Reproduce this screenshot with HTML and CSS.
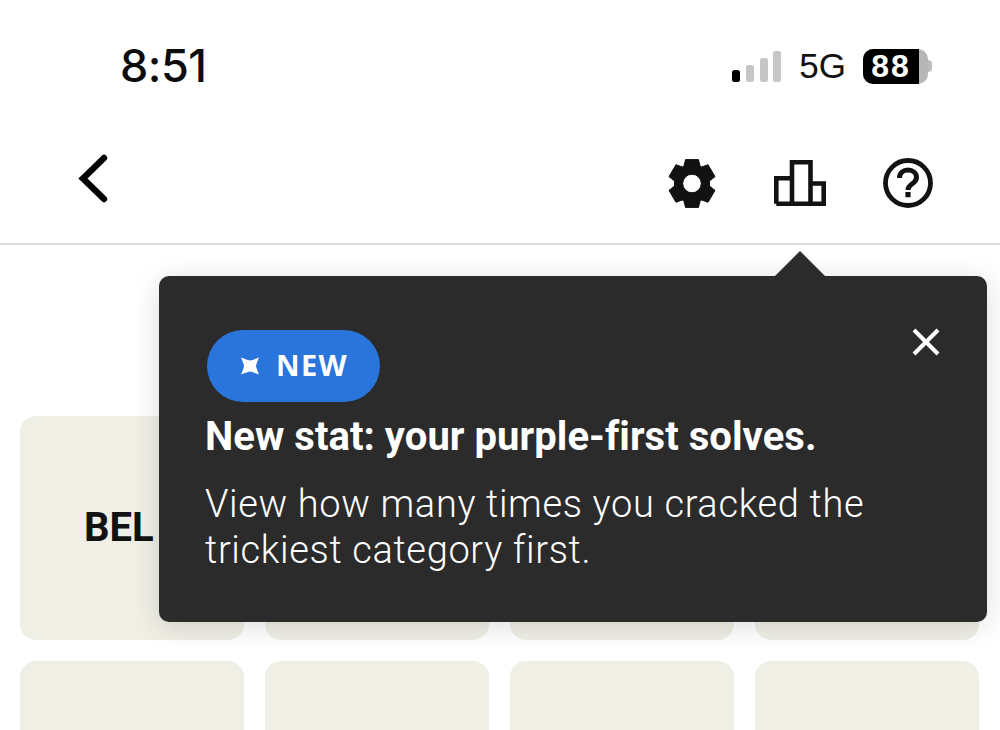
FILE: index.html
```html
<!DOCTYPE html>
<html lang="en">
<head>
<meta charset="utf-8">
<title>Connections</title>
<link rel="stylesheet" href="styles.css">
</head>
<body>
<div class="app">
  <div class="status">
    <span class="time">8:51</span>
    <div class="status-right">
      <div class="signal"><i class="bar b1 on"></i><i class="bar b2"></i><i class="bar b3"></i><i class="bar b4"></i></div>
      <span class="net">5G</span>
      <div class="battery"><div class="batt-body"><span class="batt-fill">88</span><span class="batt-rest"></span></div><i class="batt-cap"></i></div>
    </div>
  </div>
  <header class="nav">
    <svg class="back" viewBox="0 0 32 50" width="32" height="50"><path d="M27 4 6 24.500 27 45" fill="none" stroke="#000" stroke-width="6.400" stroke-linecap="round"/></svg>
    <div class="nav-icons">
      <svg width="48" height="49" viewBox="0 0 48 49"><path fill="#121212" stroke="#121212" stroke-width="1" stroke-linejoin="round" fill-rule="evenodd" d="M17.500.6H30.500L32 7 33.800 8 40 5.700 47 17.600 41.500 22V27L47 31.400 40 43.300 33.800 41 32 42 30.500 48.400H17.500L16 42 14.200 41 8 43.300 1 31.400 6.500 27V22L1 17.600 8 5.700 14.200 8 16 7ZM24 15.200A9.300 9.300 0 1 0 24 33.800 9.300 9.300 0 0 0 24 15.200Z"/></svg>
      <svg width="52" height="46" viewBox="0 0 52 46"><path fill="none" stroke="#121212" stroke-width="4.600" d="M2.300 43.700V18.200H18M18 43.700V2.300H36.500V43.700M36.500 23.500H49.700V43.700H2.300"/></svg>
      <svg width="50" height="50" viewBox="0 0 50 50"><circle cx="25" cy="25" r="22.500" fill="none" stroke="#121212" stroke-width="4.800"/><path fill="none" stroke="#121212" stroke-width="5" d="M16.500 20c0-5 3.800-8 8.500-8s8.500 3 8.500 7.500c0 6.500-8.500 6-8.500 12.500"/><rect x="22.400" y="34" width="5.200" height="5.200" fill="#121212"/></svg>
    </div>
  </header>
  <main class="grid">
    <div class="tile tile-word">BEL</div><div class="tile"></div><div class="tile"></div><div class="tile"></div>
    <div class="tile"></div><div class="tile"></div><div class="tile"></div><div class="tile"></div>
  </main>
  <aside class="tip">
    <i class="tip-arrow"></i>
    <svg class="close" width="30" height="30" viewBox="0 0 30 30"><path d="M3 3 27 27M27 3 3 27" stroke="#fff" stroke-width="4" fill="none"/></svg>
    <div class="pill">
      <svg width="20" height="20" viewBox="0 0 20 20"><path fill="#fff" d="M1 1.500C5 3 7.500 4 10 4.500 12.500 4 15 3 19 1.500 17.500 5 16.500 7.500 16 10c.5 2.500 1.500 5 3 8.500-4-1.500-6.500-2.500-9-3-2.500.5-5 1.500-9 3C2.500 15 3.500 12.500 4 10 3.500 7.500 2.500 5 1 1.500z"/></svg>
      <span>NEW</span>
    </div>
    <h2 class="tip-title">New stat: your purple-first solves.</h2>
    <p class="tip-text">View how many times you cracked the trickiest category first.</p>
  </aside>
</div>
</body>
</html>
```
FILE: styles.css
```css
* { box-sizing: border-box; }
html, body { margin: 0; padding: 0; height: 100%; overflow: hidden; background: #fff; }
.app { position: relative; width: 1000px; height: 730px; overflow: hidden; font-family: "Roboto", "Liberation Sans", sans-serif; color: #121212; }
.status { height: 125px; display: flex; align-items: flex-start; justify-content: space-between; padding: 40px 68px 0 120px; }
.time { font: 500 45px/52px "Inter", "Liberation Sans", sans-serif; color: #0c0c0c; letter-spacing: -0.500px; }
.status-right { display: flex; align-items: center; height: 52px; }
.signal { display: flex; align-items: flex-end; gap: 5.700px; height: 32px; margin-right: 18px; }
.bar { display: block; width: 8px; border-radius: 2.500px; background: #c6c6c6; }
.bar.on { background: #000; }
.b1 { height: 12px; } .b2 { height: 17px; } .b3 { height: 24px; } .b4 { height: 31px; }
.net { font: 400 35px/40px "Liberation Sans", sans-serif; color: #111; margin-right: 17px; }
.battery { display: flex; align-items: center; }
.batt-body { display: flex; width: 65px; height: 35px; border-radius: 10px; overflow: hidden; background: #b6b6b6; }
.batt-fill { width: 56px; background: #000; color: #fff; font: 700 32px/35px "Liberation Sans", sans-serif; text-align: center; letter-spacing: 2px; }
.batt-rest { flex: 1; }
.batt-cap { display: block; width: 4px; height: 12px; background: #bdbdbd; border-radius: 0 6px 6px 0; }
.nav { height: 120px; border-bottom: 2px solid #dedede; display: flex; align-items: flex-start; justify-content: space-between; padding: 29px 67px 0 77px; }
.back { display: block; }
.nav-icons { display: flex; align-items: center; gap: 57.500px; padding-top: 4px; }
.grid { display: grid; grid-template-columns: repeat(4, 224px); grid-auto-rows: 224px; gap: 21px; padding: 171px 0 0 20px; }
.tile { background: #efefe6; border-radius: 16px; display: flex; align-items: center; justify-content: center; }
.tile-word { justify-content: flex-start; padding-left: 64px; font: 700 40px/1 "Roboto", "Liberation Sans", sans-serif; color: #121212; }
.tip { position: absolute; left: 159px; top: 276px; width: 828px; height: 346px; background: #2b2b2b; border-radius: 10px; padding: 54px 46px 0 46px; color: #fff; box-shadow: 0 4px 28px rgba(0,0,0,.14); }
.tip-arrow { position: absolute; left: 615px; top: -25px; width: 52px; height: 26px; background: #2b2b2b; clip-path: polygon(50% 0, 100% 100%, 0 100%); }
.close { position: absolute; left: 752px; top: 51px; }
.pill { display: flex; align-items: center; width: 173px; height: 72px; margin-left: 2px; padding-left: 33px; gap: 16px; background: #2a75dc; border-radius: 36px; }
.pill span { font: 700 29px/1 "Open Sans", "Liberation Sans", sans-serif; letter-spacing: 1.300px; padding-bottom: 4px; }
.tip-title { margin: 12px 0 0; font: 700 40px/46px "Roboto", "Liberation Sans", sans-serif; white-space: nowrap; letter-spacing: 0.050px; }
.tip-text { margin: 21px 0 0; font: 300 38px/46px "Roboto", "Liberation Sans", sans-serif; letter-spacing: 0.650px; }
```
